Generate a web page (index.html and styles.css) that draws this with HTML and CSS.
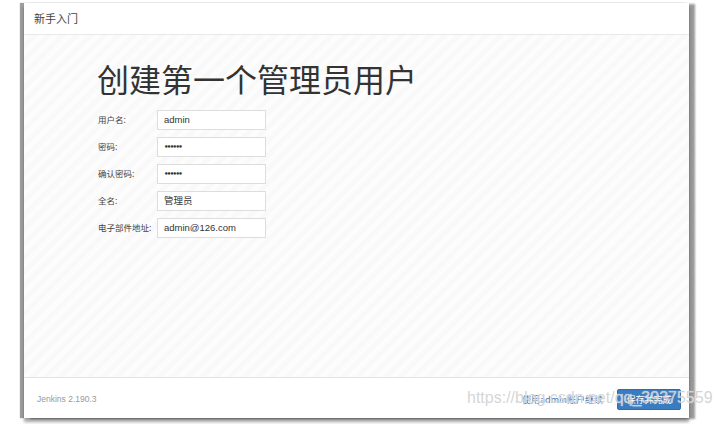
FILE: index.html
```html
<!DOCTYPE html>
<html lang="zh">
<head>
<meta charset="utf-8">
<title>新手入门</title>
<link rel="stylesheet" href="styles.css">
</head>
<body>
<div class="page">
  <div class="dialog">
    <div class="dlg-header">新手入门</div>
    <div class="dlg-body">
      <h1 class="title">创建第一个管理员用户</h1>
      <div class="form">
        <label class="lbl">用户名:</label><div class="inp">admin</div>
        <label class="lbl">密码:</label><div class="inp dots">••••••</div>
        <label class="lbl">确认密码:</label><div class="inp dots">••••••</div>
        <label class="lbl">全名:</label><div class="inp">管理员</div>
        <label class="lbl">电子部件地址:</label><div class="inp">admin@126.com</div>
      </div>
    </div>
    <div class="dlg-footer">
      <span class="version">Jenkins 2.190.3</span>
      <div class="actions">
        <a class="link">使用admin账户继续</a>
        <button class="btn">保存并完成</button>
      </div>
    </div>
  </div>
  <div class="watermark">https://blog.csdn.net/qq_39375559</div>
</div>
</body>
</html>
```

FILE: styles.css
```css
html, body {
  margin: 0;
  padding: 0;
  background: #fff;
  font-family: "Liberation Sans", "Noto Sans CJK SC", sans-serif;
  color: #333;
}
.page {
  position: relative;
  width: 719px;
  height: 424px;
  padding: 3px 0 0 24px;
  box-sizing: border-box;
}
.dialog {
  width: 665px;
  height: 415px;
  display: flex;
  flex-direction: column;
  background: #fff;
  box-shadow: -4px 0 1px rgba(0,0,0,0.38), 6px 1px 2px rgba(0,0,0,0.4), 0 4px 3px rgba(0,0,0,0.35);
}
.dlg-header {
  height: 32px;
  box-sizing: border-box;
  padding: 8px 0 0 10px;
  font-family: "Noto Sans CJK SC", sans-serif;
  font-size: 11px;
  line-height: 14px;
  color: #444;
  border-bottom: 1px solid #e9e9e9;
}
.dlg-body {
  flex: 1;
  background-color: #fafafa;
  background-image: repeating-linear-gradient(135deg, rgba(255,255,255,0.5) 0 5px, rgba(246,246,246,0.3) 5px 10px);
  padding: 0 0 0 73px;
}
.title {
  margin: 23px 0 0 0;
  font-family: "Noto Sans CJK SC", sans-serif;
  font-weight: 400;
  font-size: 32px;
  line-height: 40px;
  color: #333;
}
.form {
  display: grid;
  grid-template-columns: 59px 109px;
  row-gap: 7px;
  margin: 12px 0 0 1px;
}
.lbl {
  font-family: "Noto Sans CJK SC", sans-serif;
  font-size: 8.5px;
  line-height: 12px;
  padding-top: 3px;
  color: #444;
}
.inp {
  height: 20px;
  box-sizing: border-box;
  border: 1px solid #ddd;
  background: #fff;
  padding: 0 6px;
  font-family: "Liberation Sans", "Noto Sans CJK SC", sans-serif;
  font-size: 9.5px;
  line-height: 18px;
  color: #333;
}
.inp.dots {
  font-family: "DejaVu Sans", sans-serif;
  font-size: 7px;
  letter-spacing: -1.6px;
  font-weight: bold;
}
.dlg-footer {
  height: 41px;
  box-sizing: border-box;
  border-top: 1px solid #e3e3e3;
  display: flex;
  align-items: center;
  justify-content: space-between;
  padding: 0 8px 0 13px;
}
.version {
  font-size: 8.5px;
  color: #999;
  padding-top: 2px;
}
.actions {
  display: flex;
  align-items: center;
  gap: 14px;
}
.link {
  font-family: "Noto Sans CJK SC", sans-serif;
  font-size: 9px;
  color: #3b6fb0;
  padding-top: 2px;
}
.btn {
  width: 64px;
  height: 21px;
  border: 1px solid #2f6ca8;
  border-radius: 2px;
  background: #3b7cc0;
  color: #fff;
  font-family: "Noto Sans CJK SC", sans-serif;
  font-size: 9px;
  padding: 0;
  margin-top: 2px;
}
.watermark {
  position: absolute;
  left: 467px;
  top: 389px;
  font-family: "Liberation Sans", sans-serif;
  font-size: 16px;
  color: rgba(205,205,205,0.85);
  text-shadow: 0 0 1px rgba(255,255,255,0.8);
  white-space: nowrap;
}
```
